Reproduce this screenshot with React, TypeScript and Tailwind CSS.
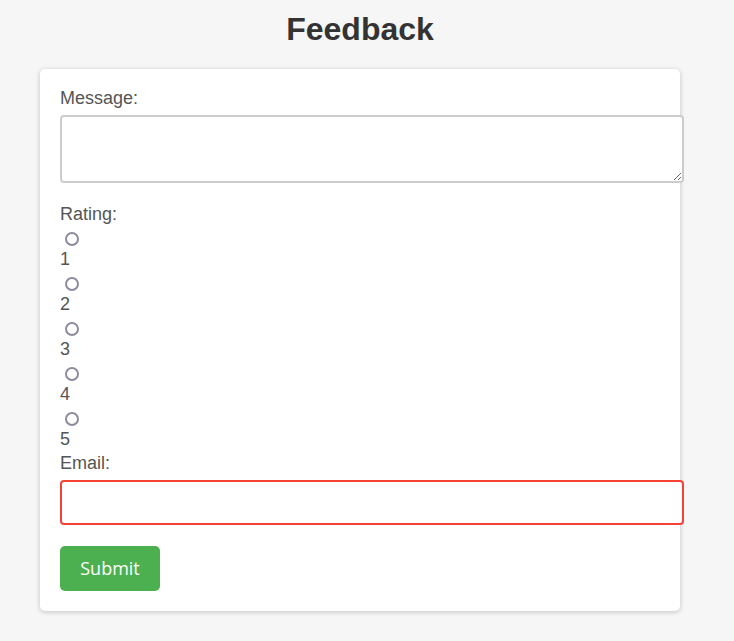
import React from "react";

export default function App() {
  const ratings = ["1", "2", "3", "4", "5"];
  return (
    <div className="min-h-screen bg-[#f6f6f6] text-[18px]" style={{ fontFamily: '"Liberation Sans", Arial, sans-serif' }}>
      <div className="w-[640px] ml-[40px] pt-[11px]">
        <h1 className="text-center text-[32px] leading-[37px] font-bold text-[#333] mb-[21px]">Feedback</h1>
        <div className="bg-white rounded-[5px] shadow-[0_1px_5px_rgba(0,0,0,0.22)] p-[20px]">
          <label className="block leading-[18px] text-[#555] mb-[8px]">Message:</label>
          <textarea className="block w-[624px] h-[68px] border-2 border-[#ccc] rounded-[4px] p-[10px] bg-white outline-none" />
          <label className="block leading-[18px] text-[#555] mt-[22px] mb-[8px]">Rating:</label>
          {ratings.map((r, i) => (
            <div key={r}>
              <div className="h-[19px] pt-[1px]">
                <span className="block w-[14px] h-[14px] ml-[5px] rounded-full border-2 border-[#8c8c9e] bg-white" />
              </div>
              <label className={"block leading-[18px] text-[#555] " + (i === 4 ? "mb-[6px]" : "mb-[8px]")}>{r}</label>
            </div>
          ))}
          <label className="block leading-[18px] text-[#555] mb-[8px]">Email:</label>
          <input type="email" className="block w-[624px] h-[45px] border-2 border-[#f44336] rounded-[4px] px-[10px] bg-white outline-none" />
          <button
            className="block mt-[21px] w-[100px] h-[45px] bg-[#4caf50] text-white text-[18px] rounded-[5px]"
            style={{ fontFamily: '"Open Sans", sans-serif' }}
          >
            Submit
          </button>
        </div>
      </div>
    </div>
  );
}
